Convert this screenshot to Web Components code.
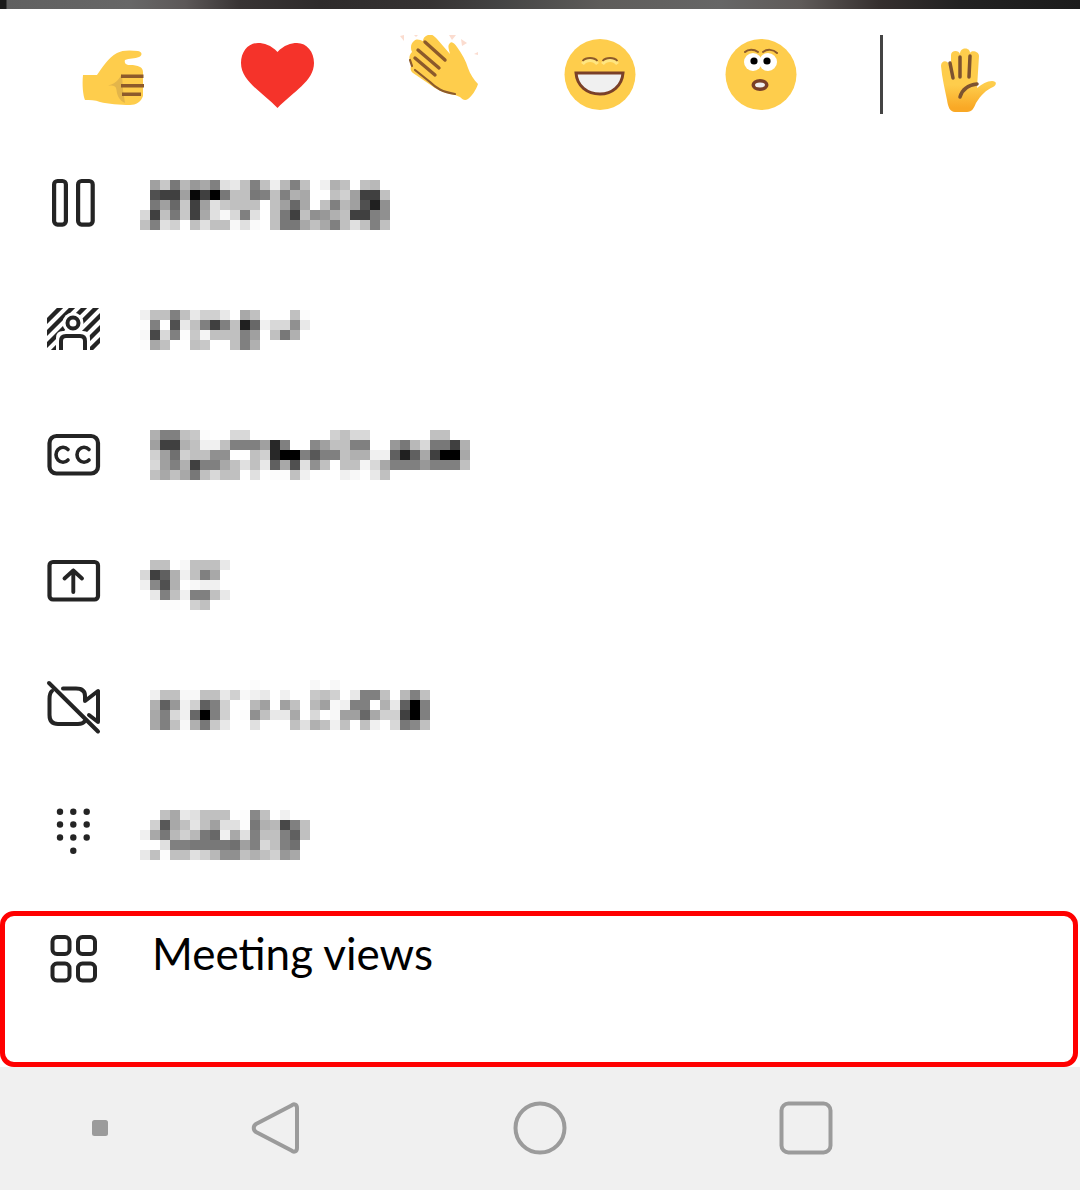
<!DOCTYPE html>
<html lang="en">
  <head>
    <meta charset="UTF-8" />
    <title>Meeting menu</title>
    <style>
      html, body { margin: 0; background: #fff; }
      svg { display: block; }
    </style>
  </head>
  <body>
    <template id="top-strip">
      <style>
        :host {
          display: block;
          height: 9px;
          background: linear-gradient(90deg, #1a1a1a 0, #1a1a1a 6px, #606060 7px, #676767 130px, #5c5858 185px, #383434 240px, #2e2b2b 320px, #363333 430px, #444 500px, #5e5c5a 600px, #666 720px, #5f5b59 800px, #352f2e 880px, #222 960px, #1c1c1c 1080px);
        }
      </style>
    </template>

    <template id="reaction-bar">
      <style>
        :host { display: flex; height: 79px; padding: 26px 0 26px 36px; }
        .items { display: grid; grid-template-columns: repeat(5, 161px); justify-items: center; }
        .rule { width: 3px; background: #444; margin-left: 39px; }
        .after { margin-left: 44px; }
      </style>
      <div class="items"><slot></slot></div>
      <div class="rule"></div>
      <div class="after"><slot name="after"></slot></div>
    </template>

    <template id="menu-row">
      <style>
        :host {
          display: flex;
          height: 126px;
          box-sizing: border-box;
          padding-left: 43px;
          font: 44px/50px Lato, "Open Sans", sans-serif;
          color: #000;
        }
        .icon { width: 60px; height: 60px; margin-top: 33px; flex: none; }
        :host([active]) {
          width: 1078px;
          height: 156px;
          margin-top: 15px;
          padding: 0 0 0 38px;
          border: 5px solid #f00;
          border-radius: 14px;
        }
        :host([active]) .icon { margin-top: 12px; }
      </style>
      <div class="icon"><slot name="icon"></slot></div>
      <slot name="label"></slot>
    </template>

    <template id="pixel-blur">
      <style>
        :host { display: block; }
        .grid { display: grid; grid-auto-rows: 10px; }
      </style>
      <div class="grid"></div>
    </template>

    <template id="nav-bar">
      <style>
        :host {
          display: flex;
          align-items: center;
          height: 121px;
          padding: 0 0 2px 91px;
          background: #f0f0f0;
        }
      </style>
      <slot></slot>
    </template>

    <top-strip></top-strip>

    <reaction-bar>
      <svg width="81" height="79" viewBox="0 0 81 79">
        <g transform="translate(-76 -35)">
          <path fill="#fecd4c" d="M83 75 H97 C102 68 108 58 117 53 C122 50 130 50 138 51 C143 52 142 56 139 57 C135 59 129 58 125 60 C124 63 126 65 130 65 C138 65 143 67 143 72 L143 96 C141 102 136 105 130 105 C120 105 108 104 100 102 C95 100 90 100 85 100 C83 95 82 85 83 75 Z" />
          <path fill="#e3b54a" d="M122 74 C119 78 118 83 108 85.5 C114 85.5 116 86 116.5 90 C117 96 120 101 125 103 L123 90 Z" />
          <path fill="#8c5a2b" d="M121 74.5 H143.5 V78 H121 Z M121 84 H144 V87.5 H121 Z M122 92.5 H141 V96 H122 Z" />
        </g>
      </svg>
      <svg width="81" height="79" viewBox="0 0 81 79">
        <g transform="translate(-237 -35)">
          <path fill="#f5332a" d="M277.5 52 C271 45 264 43 258 43 C248 43 241 52 241 63 C241 81 262 92 277.5 108 C293 92 314 81 314 63 C314 52 307 43 297 43 C291 43 284 45 277.5 52 Z" />
        </g>
      </svg>
      <svg width="81" height="79" viewBox="0 0 81 79">
        <g transform="translate(-398 -35)">
          <path fill="#fbdccf" d="M400 36 L404 35 L404 41 Z M449 35 L456 35 L452 40 Z M461 39 L467 43 L462 46 Z M474 54 L478 52 L478 55 Z M414 35 L418 35 L416 37 Z" />
          <path fill="#fecd4c" d="M428 35 C431 33 434 36 437 39 L450 54 C449 49 447 46 450 43 C452 41 455 44 457 47 C462 54 466 61 468 68 C470 74 474 80 478 84 C476 90 472 96 468 99 C465 101 463 100 460 97 L455 95 C446 93 440 91 435 88 L413 73 C409 70 411 66 412 63 C408 60 409 55 412 52 C410 48 411 43 414 41 C417 38 420 40 423 41 C423 38 425 36 428 35 Z" />
          <path fill="none" stroke="#8c5a2b" stroke-width="3.4" stroke-linecap="round" d="M425 42 L445 60 M418 50 L439 68 M415 58 L435 75" />
          <path fill="none" stroke="#8c5a2b" stroke-width="2.2" stroke-linecap="round" d="M410 60 L412 66 M415 70 L430 82 C436 88 442 92 455 94" />
        </g>
      </svg>
      <svg width="81" height="79" viewBox="0 0 81 79">
        <g transform="translate(-559 -35)">
          <circle cx="600" cy="74.5" r="35.5" fill="#fecd4c" />
          <path fill="none" stroke="#ffe680" stroke-width="3.5" d="M582.5 64 C586 59 594 59 597.5 64 M602.5 64 C606 59 614 59 617.5 64" />
          <path fill="none" stroke="#8c5a2b" stroke-width="1.8" d="M582.5 61 C586 57 594 57 597.5 61 M602.5 61 C606 57 614 57 617.5 61" />
          <path fill="#f0f0f0" stroke="#7a4028" stroke-width="3" d="M576 73 H623 C622 86 612 94 600 94 C587 94 577 86 576 73 Z" />
        </g>
      </svg>
      <svg width="81" height="79" viewBox="0 0 81 79">
        <g transform="translate(-720 -35)">
          <circle cx="761" cy="74.5" r="35.5" fill="#fecd4c" />
          <circle cx="753" cy="62" r="9" fill="#fff" />
          <circle cx="768" cy="62" r="9" fill="#fff" />
          <circle cx="754" cy="61" r="3.6" fill="#000" />
          <circle cx="767" cy="61" r="3.6" fill="#000" />
          <path fill="none" stroke="#8c5a2b" stroke-width="2" stroke-linecap="round" d="M745 52 C748 49 754 49 758 52 M763 52 C767 49 773 49 777 53" />
          <ellipse cx="760" cy="85" rx="8.5" ry="6" fill="#7a4028" />
          <ellipse cx="760" cy="85" rx="5" ry="2.5" fill="#f0f0f0" />
        </g>
      </svg>
      <svg slot="after" width="81" height="79" viewBox="0 0 81 79">
        <defs>
          <linearGradient id="palm" gradientUnits="userSpaceOnUse" x1="0" y1="85" x2="0" y2="108">
            <stop offset="0" stop-color="#fecd4c" />
            <stop offset="1" stop-color="#f9a825" />
          </linearGradient>
        </defs>
        <g transform="translate(-927 -35)">
          <path fill="url(#palm)" d="M941 66 C941 60 948 60 949 65 L951 67 L951 55 C951 50 959 50 960 54 C960 47 970 47 970 53 C971 50 979 51 979 56 L977 88 C982 84 987 81 992 81 C997 81 997 85 993 87 C986 90 981 95 976 103 C974 108 972 112 967 112 H955 C950 112 948 107 947 100 C945 90 942 78 941 66 Z" />
          <path fill="none" stroke="#7d5330" stroke-width="3.5" stroke-linecap="round" d="M950 63 L953 78 M960 57 V77 M970 56 L969 77 M960 97 C962 90 968 85 977 84" />
        </g>
      </svg>
    </reaction-bar>

    <menu-row>
      <svg slot="icon" width="60" height="60" viewBox="0 0 60 60">
        <g transform="translate(-43 -173)" fill="none" stroke="#242424" stroke-width="4.2">
          <rect x="54.1" y="181" width="11.8" height="43.6" rx="3.5" />
          <rect x="78.1" y="181" width="14.6" height="43.6" rx="3.5" />
        </g>
      </svg>
      <pixel-blur slot="label" style="margin: 40px 0 0 37px" data="ff a0 c8 78 b8 98 a8 80 e0 e8 c0 80 c0 ee b8 80 c0 ff f0 b0 c0 ff c0 b8 ff/ff 50 40 40 a0 08 40 00 78 c0 c0 78 80 c0 80 b0 a8 ff ff c0 d0 a0 40 40 c0/ff 78 a0 68 c8 40 a0 e0 c8 c0 c0 c0 ff c0 a0 68 a8 ff c0 80 b8 a0 50 20 90/d8 40 c0 78 c8 40 a8 e0 f8 d8 80 e0 ff c0 78 40 c0 90 98 b0 c0 40 40 80 90/c0 80 e0 d0 ff c0 e0 c0 c0 f8 e0 fa ff c0 78 78 a8 c0 a8 80 c0 e0 c0 80 c0"></pixel-blur>
    </menu-row>

    <menu-row>
      <svg slot="icon" width="60" height="60" viewBox="0 0 60 60">
        <defs>
          <clipPath id="blur-box"><rect x="47" y="308" width="53" height="42" /></clipPath>
        </defs>
        <g transform="translate(-43 -299)">
          <g clip-path="url(#blur-box)">
            <path fill="none" stroke="#242424" stroke-width="4.4" d="M40 328 L65 303 M40 340 L77 303 M40 352 L89 303 M40 364 L101 303 M40 376 L113 303 M40 388 L125 303 M40 400 L137 303" />
            <circle cx="73" cy="323" r="10.5" fill="#fff" />
            <path fill="#fff" d="M56 352 V338 Q56 331 63 331 H83 Q90 331 90 338 V352 Z" />
            <circle cx="73" cy="323" r="5.5" fill="none" stroke="#242424" stroke-width="4" />
            <path fill="none" stroke="#242424" stroke-width="4" d="M61 352 V341 Q61 336 66 336 H80 Q85 336 85 341 V352" />
          </g>
        </g>
      </svg>
      <pixel-blur slot="label" style="margin: 44px 0 0 37px" data="f0 c0 c0 80 c0 e8 d0 d0 e8 ff a8 c0 ff ff ff c0 fc/fc 80 ff 50 e8 c0 80 40 80 c0 20 68 f0 d8 d8 90 e8/f8 48 d8 80 fc c8 f4 c0 c0 c0 80 a0 ff c0 78 b0 ff/fc a8 c0 ff ff c0 c8 ff ff c0 80 b0 ff ff ff ff ff"></pixel-blur>
    </menu-row>

    <menu-row>
      <svg slot="icon" width="60" height="60" viewBox="0 0 60 60">
        <g transform="translate(-43 -425)" fill="none" stroke="#242424">
          <rect x="49.5" y="436" width="48.5" height="37.5" rx="7" stroke-width="4.2" />
          <path stroke-width="3.6" stroke-linecap="round" d="M68 449.5 A7 7.5 0 1 0 68 460 M89 449.5 A7 7.5 0 1 0 89 460" />
        </g>
      </svg>
      <pixel-blur slot="label" style="margin: 38px 0 0 47px" data="b0 80 80 c0 c8 fc ff ff d8 d8 ff ff ff ff ff ff ff ff d0 c0 d8 d8 ff ff ff ff ff ff c0 c0 ff ff/a0 40 40 b0 c0 f0 f0 c0 80 80 80 a0 28 80 ff ff 88 a0 c0 c0 80 80 ff ff 98 78 b8 d8 78 78 40 b0/d0 a0 70 d0 c0 c0 90 90 ff ff c0 d0 28 00 00 80 58 80 80 c0 b0 b0 f0 f0 60 20 60 a8 40 00 00 a8/d8 a0 80 b0 40 80 80 a8 c0 e0 c0 e8 60 a8 50 e0 90 c0 ff c0 c0 f4 d8 a8 80 80 80 98 80 80 80 c0/c0 a8 c0 a8 78 c0 d8 c0 c0 ff e0 ff fc fc c0 f0 ff ff ff f0 f8 ff e8 c0 ff ff ff ff ff ff ff ff"></pixel-blur>
    </menu-row>

    <menu-row>
      <svg slot="icon" width="60" height="60" viewBox="0 0 60 60">
        <g transform="translate(-43 -551)" fill="none" stroke="#242424" stroke-linecap="round" stroke-linejoin="round">
          <rect x="49.5" y="562" width="48.5" height="37.5" rx="3.5" stroke-width="4.2" />
          <path stroke-width="3.9" d="M73.3 592 V570.5 M64.5 578.5 L73.3 570.5 L82 578.5" />
        </g>
      </svg>
      <pixel-blur slot="label" style="margin: 42px 0 0 37px" data="ff c0 c0 ff f8 c0 c0 c0 e8/d8 40 60 b0 f0 c0 80 a8 ff/f0 88 50 b0 ff f8 f0 f0 ff/ff e8 80 c0 f0 80 80 c0 e8/ff ff fc fc ff d0 c0 ff ff"></pixel-blur>
    </menu-row>

    <menu-row>
      <svg slot="icon" width="60" height="60" viewBox="0 0 60 60">
        <g transform="translate(-43 -677)" fill="none" stroke="#242424" stroke-width="4" stroke-linecap="round" stroke-linejoin="round">
          <path d="M63 688.5 H76 Q85 688.5 85 696 V701 L98 691 V722 L89 715" />
          <path d="M52 691 Q49.5 693 49.5 699 V715 Q49.5 724 58 724 H78 Q83 724 85 721" />
          <path d="M49 683 L98 731.5" />
        </g>
      </svg>
      <pixel-blur slot="label" style="margin: 36px 0 0 47px" data="ff ff ff ff ff ff ff ff ff ff fc ff ff ff ff ff f8 ff f8 ff ff ff ff ff ff ff ff ff/f0 c0 c0 f8 f8 c0 c0 e8 d0 f8 f0 e8 ff f0 ff ff c8 c0 d0 ff e8 80 80 c0 ff b8 80 c0/b0 60 98 f0 d0 60 80 d0 ff ff b8 a0 ff a0 c0 ff b8 a0 f8 f0 80 80 ff b0 e8 60 00 80/a8 80 d8 f0 68 00 80 d0 ff fc 90 c0 e8 e8 a8 ff d8 ff f8 a0 a0 68 a8 d0 d0 40 00 80/a8 80 c0 f8 b0 78 c8 e8 ff ff e0 ff ff ff c0 e0 b0 c0 f0 c0 ff c0 f0 ff d8 78 88 c0"></pixel-blur>
    </menu-row>

    <menu-row>
      <svg slot="icon" width="60" height="60" viewBox="0 0 60 60">
        <g transform="translate(-43 -803)" fill="#242424">
          <circle cx="60" cy="811.7" r="3.2" /><circle cx="73.3" cy="811.7" r="3.2" /><circle cx="86.7" cy="811.7" r="3.2" />
          <circle cx="60" cy="824.5" r="3.2" /><circle cx="73.3" cy="824.5" r="3.2" /><circle cx="86.7" cy="824.5" r="3.2" />
          <circle cx="60" cy="837.5" r="3.2" /><circle cx="73.3" cy="837.5" r="3.2" /><circle cx="86.7" cy="837.5" r="3.2" />
          <circle cx="73.3" cy="850.7" r="3.2" />
        </g>
      </svg>
      <pixel-blur slot="label" style="margin: 40px 0 0 37px" data="ff ff c0 a8 e8 e0 c0 c0 c0 ff fc 88 c0 ff f0 ff ff/ff d0 58 a8 c0 e4 c0 a0 e0 e0 fc 78 b0 b8 48 80 c0/f0 a8 78 b8 d0 b8 78 68 f0 a8 e0 80 c0 c0 80 60 c0/ff ff e0 80 80 78 78 78 78 70 a0 80 d8 c0 80 70 ff/e8 c0 fc c0 c0 e0 d0 b8 90 90 c0 b0 c0 d0 98 a8 ff"></pixel-blur>
    </menu-row>

    <menu-row active>
      <svg slot="icon" width="60" height="60" viewBox="0 0 60 60">
        <g transform="translate(-43 -928)" fill="none" stroke="#242424" stroke-width="4">
          <rect x="52.5" y="937" width="17" height="17" rx="4.5" />
          <rect x="78" y="937" width="17" height="17" rx="4.5" />
          <rect x="52.5" y="963.5" width="17" height="17" rx="4.5" />
          <rect x="78" y="963.5" width="17" height="17" rx="4.5" />
        </g>
      </svg>
      <span slot="label" style="margin: 12px 0 0 49px">Meeting views</span>
    </menu-row>

    <nav-bar>
      <svg width="18" height="18" viewBox="0 0 18 18"><rect x="1" y="1" width="16" height="16" rx="2.5" fill="#9b9b9b" /></svg>
      <svg style="margin-left: 141px" width="50" height="54" viewBox="0 0 50 54">
        <path fill="none" stroke="#9b9b9b" stroke-width="4" stroke-linejoin="round" d="M41.5 4.5 C44 2.2 47 3.5 47 7 V47 C47 50.5 44 51.8 41.5 49.5 L6 31 C3 29 3 25 6 23 Z" />
      </svg>
      <svg style="margin-left: 213px" width="54" height="54" viewBox="0 0 54 54">
        <circle cx="27" cy="27" r="24.5" fill="none" stroke="#9b9b9b" stroke-width="4" />
      </svg>
      <svg style="margin-left: 212px" width="54" height="54" viewBox="0 0 54 54">
        <rect x="2.5" y="2.5" width="49" height="49" rx="7" fill="none" stroke="#9b9b9b" stroke-width="4" />
      </svg>
    </nav-bar>

    <script>
      // elements that are only their template
      function plain(name) {
        customElements.define(
          name,
          class extends HTMLElement {
            constructor() {
              super()
              const template = document.querySelector("#" + name)
              this.attachShadow({ mode: "open" }).appendChild(template.content.cloneNode(true))
            }
          }
        )
      }
      plain("top-strip")
      plain("reaction-bar")
      plain("menu-row")
      plain("nav-bar")

      // mosaic over the hidden labels, data is grey values row by row
      customElements.define(
        "pixel-blur",
        class extends HTMLElement {
          constructor() {
            super()
            const template = document.querySelector("#pixel-blur")
            this.attachShadow({ mode: "open" }).appendChild(template.content.cloneNode(true))
          }
          connectedCallback() {
            const rows = this.getAttribute("data").split("/").map((r) => r.trim().split(" "))
            const grid = this.shadowRoot.querySelector(".grid")
            grid.style.gridTemplateColumns = "repeat(" + rows[0].length + ", 10px)"
            rows.flat().forEach((g) => {
              const cell = document.createElement("div")
              cell.style.background = "#" + g + g + g
              grid.appendChild(cell)
            })
          }
        }
      )
    </script>
  </body>
</html>
